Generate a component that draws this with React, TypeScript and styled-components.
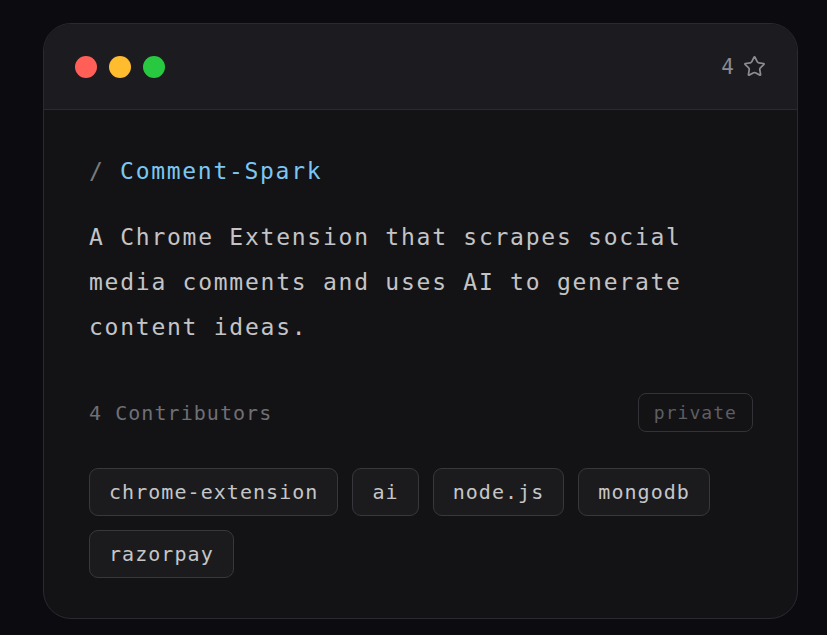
import React from 'react';
import styled, { createGlobalStyle } from 'styled-components';
import { Star } from 'lucide-react';

const GlobalStyle = createGlobalStyle`
  html, body {
    margin: 0;
    padding: 0;
    background-color: #0c0c10;
  }
  body {
    font-family: "DejaVu Sans Mono", "Liberation Mono", monospace;
  }
`;

const Page = styled.div`
  min-height: 635px;
  padding: 23px 0 0 43px;
  box-sizing: border-box;
`;

const Card = styled.div`
  width: 755px;
  height: 596px;
  box-sizing: border-box;
  background-color: #131316;
  border: 1px solid #2b2a30;
  border-radius: 28px;
  overflow: hidden;
  display: flex;
  flex-direction: column;
`;

const TitleBar = styled.div`
  height: 86px;
  flex-shrink: 0;
  box-sizing: border-box;
  display: flex;
  align-items: center;
  justify-content: space-between;
  padding: 0 31px 0 31px;
  background-color: #1c1b1f;
  border-bottom: 1px solid #2c2b30;
`;

const Dots = styled.div`
  display: flex;
  gap: 12px;
`;

const Dot = styled.span<{ $color: string }>`
  width: 22px;
  height: 22px;
  border-radius: 50%;
  background-color: ${props => props.$color};
`;

const StarCount = styled.div`
  display: flex;
  align-items: center;
  gap: 9px;
  color: #8b8b90;
  font-size: 21px;
`;

const Body = styled.div`
  flex: 1;
  display: flex;
  flex-direction: column;
  padding: 45px 44px 0 45px;
`;

const Title = styled.h2`
  margin: 0;
  font-size: 23px;
  font-weight: 400;
  letter-spacing: 1.7px;
  line-height: 32px;
  color: #7a7a7e;
`;

const RepoName = styled.span`
  color: #7cc7f0;
`;

const Description = styled.p`
  margin: 28px 0 0;
  font-size: 23px;
  line-height: 45px;
  letter-spacing: 1.75px;
  color: #c4c4c6;
`;

const MetaRow = styled.div`
  margin-top: 43px;
  display: flex;
  align-items: center;
  justify-content: space-between;
`;

const Contributors = styled.span`
  font-size: 20px;
  letter-spacing: 1.05px;
  color: #6f6f74;
`;

const Visibility = styled.span`
  height: 39px;
  box-sizing: border-box;
  display: inline-flex;
  align-items: center;
  padding: 0 15px 0 15px;
  border: 1px solid #333237;
  border-radius: 8px;
  font-size: 18px;
  letter-spacing: 1.05px;
  color: #5e5e63;
`;

const Tags = styled.div`
  margin-top: 36px;
  display: flex;
  flex-wrap: wrap;
  gap: 14px;
`;

const Tag = styled.span`
  height: 48px;
  box-sizing: border-box;
  display: inline-flex;
  align-items: center;
  padding: 0 19px 0 19px;
  background-color: #1b1b1e;
  border: 1px solid #38373c;
  border-radius: 9px;
  font-size: 20px;
  letter-spacing: 1.05px;
  color: #c6c6c8;
`;

const topics = ['chrome-extension', 'ai', 'node.js', 'mongodb', 'razorpay'];

export default function App() {
  return (
    <>
      <GlobalStyle />
      <Page>
        <Card>
          <TitleBar>
            <Dots>
              <Dot $color="#ff5f57" />
              <Dot $color="#febc2e" />
              <Dot $color="#28c840" />
            </Dots>
            <StarCount>
              4
              <Star size={23} strokeWidth={1.8} />
            </StarCount>
          </TitleBar>
          <Body>
            <Title>
              / <RepoName>Comment-Spark</RepoName>
            </Title>
            <Description>
              A Chrome Extension that scrapes social media comments and uses AI to generate content ideas.
            </Description>
            <MetaRow>
              <Contributors>4 Contributors</Contributors>
              <Visibility>private</Visibility>
            </MetaRow>
            <Tags>
              {topics.map(topic => (
                <Tag key={topic}>{topic}</Tag>
              ))}
            </Tags>
          </Body>
        </Card>
      </Page>
    </>
  );
}
